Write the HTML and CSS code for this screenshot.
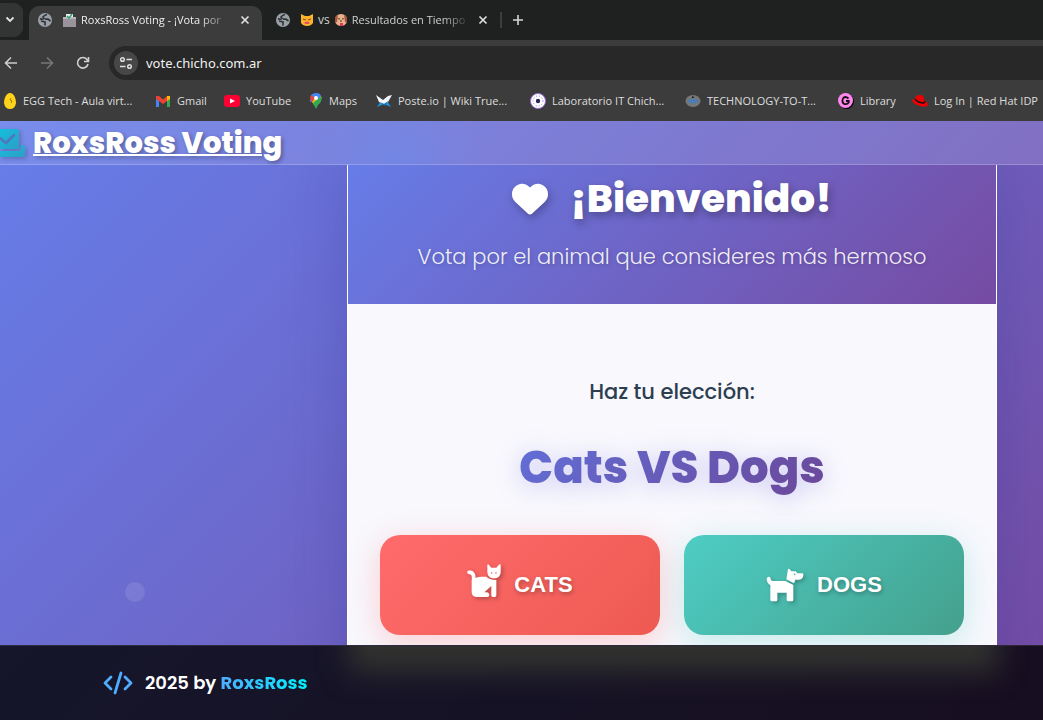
FILE: index.html
```html
<!DOCTYPE html>
<html lang="es">
<head>
<meta charset="utf-8">
<title>RoxsRoss Voting</title>
<link rel="stylesheet" href="styles.css">
</head>
<body>
<svg width="0" height="0" class="defs" aria-hidden="true">
  <defs>
    <symbol id="globe" viewBox="0 0 14 14"><circle cx="7" cy="7" r="7" fill="#9aa0a6"/><path d="M2 5.500Q4.500 7 6 5.500L5 4Q6.500 2.200 9 1.500M7 6.200H10L12.500 8M3 8L7 9V12.500" fill="none" stroke="#30363a" stroke-width="1.700"/></symbol>
    <symbol id="close" viewBox="0 0 10 10"><path d="M1.500 1.500L8.500 8.500M8.500 1.500L1.500 8.500" stroke="#e3e3e3" stroke-width="1.600"/></symbol>
    <linearGradient id="teal" x1="0" y1="0" x2="1" y2="1"><stop offset="0" stop-color="#16bddd"/><stop offset="1" stop-color="#2b9fc6"/></linearGradient>
  </defs>
</svg>
<div class="browser">
  <div class="tabs">
    <button class="tab-search" aria-label="Buscar pestañas"><svg width="10" height="10" viewBox="0 0 10 10"><path d="M1.500 3.500L5 7L8.500 3.500" fill="none" stroke="#e3e3e3" stroke-width="1.800"/></svg></button>
    <div class="tab active">
      <svg width="14" height="14"><use href="#globe"/></svg>
      <svg width="13" height="13" viewBox="0 0 13 13"><path d="M3 0H10V5H3Z" fill="#eee"/><path d="M0 3H13V13H0Z" fill="#9a929d"/><path d="M0 3H13V5H0Z" fill="#b9b4bd"/><path d="M4 2L6 4L9 0" fill="none" stroke="#2aa56b" stroke-width="1.500"/></svg>
      <span class="tab-title">RoxsRoss Voting - ¡Vota por</span>
      <button class="x" aria-label="Cerrar"><svg width="10" height="10"><use href="#close"/></svg></button>
    </div>
    <div class="tab">
      <svg width="14" height="14"><use href="#globe"/></svg>
      <svg width="12" height="12" viewBox="0 0 12 12"><path d="M0 0L4 2H8L12 0V9Q10 12 6 12Q2 12 0 9Z" fill="#fbb42c"/><path d="M2 5L5 6M10 5L7 6" stroke="#9c4a18" stroke-width="1.200"/><path d="M3 9Q6 6 9 9Q6 11 3 9Z" fill="#e8416b"/></svg>
      <span>vs</span>
      <svg width="12" height="12" viewBox="0 0 12 12"><path d="M1 2Q6-2 11 2L12 8Q10 12 6 12Q2 12 0 8Z" fill="#e9b28c"/><path d="M0 3L3 1L2 8L0 9ZM12 3L9 1L10 8L12 9Z" fill="#a4563b"/><path d="M4 4V5.500M8 4V5.500M5 7H7" stroke="#432" stroke-width="1.200"/><path d="M5 9H8V12H5Z" fill="#e9365d"/></svg>
      <span class="tab-title">Resultados en Tiempo</span>
      <button class="x" aria-label="Cerrar"><svg width="10" height="10"><use href="#close"/></svg></button>
    </div>
    <span class="sep"></span>
    <button class="x" aria-label="Nueva pestaña"><svg width="12" height="12" viewBox="0 0 12 12"><path d="M6 1V11M1 6H11" stroke="#d5d5d5" stroke-width="1.600"/></svg></button>
  </div>
  <div class="toolbar">
    <button aria-label="Atrás"><svg width="14" height="14" viewBox="0 0 14 14"><path d="M13 7H2M7 1.500L1.500 7L7 12.500" fill="none" stroke="#ccc" stroke-width="1.600"/></svg></button>
    <button aria-label="Adelante"><svg width="14" height="14" viewBox="0 0 14 14"><path d="M1 7H12M7 1.500L12.500 7L7 12.500" fill="none" stroke="#777" stroke-width="1.600"/></svg></button>
    <button aria-label="Recargar"><svg width="14" height="14" viewBox="0 0 14 14"><path d="M12 8A5.300 5.300 0 1 1 11 3.500L12 5M12.500 1V5.500H8" fill="none" stroke="#d0d0d0" stroke-width="1.600"/></svg></button>
    <div class="urlbar">
      <span class="site"><svg width="14" height="14" viewBox="0 0 14 14"><path d="M7.500 3.500H13M1 10.500H6.500" stroke="#ddd" stroke-width="1.600"/><circle cx="3.500" cy="3.500" r="1.800" fill="none" stroke="#ddd" stroke-width="1.500"/><circle cx="10.500" cy="10.500" r="1.800" fill="none" stroke="#ddd" stroke-width="1.500"/></svg></span>
      <input aria-label="Dirección" value="vote.chicho.com.ar">
    </div>
  </div>
  <nav class="bookmarks">
    <a href="#"><svg width="14" height="16" viewBox="0 0 14 16"><path d="M7 0C11 0 13 6 13 10Q12 16 7 16Q2 16 1 10C1 6 3 0 7 0Z" fill="#ffd21c"/><path d="M8 5L7 7L9 8L8 10" fill="none" stroke="#a57c00"/></svg>EGG Tech - Aula virt...</a>
    <a href="#"><svg width="16" height="12" viewBox="0 0 16 12"><path d="M1 2H4V12H1Z" fill="#4285f4"/><path d="M12 2H15V12H12Z" fill="#34a853"/><path d="M1 1L4 1L8 4.500L12 1H15V4L8 9L1 4Z" fill="#ea4335"/><path d="M12 1H15V4L12 6Z" fill="#fbbc04"/></svg>Gmail</a>
    <a href="#"><svg width="16" height="12" viewBox="0 0 16 12"><rect width="16" height="12" rx="3" fill="#ff0033"/><path d="M6 3.500L11 6L6 8.500Z" fill="#fff"/></svg>YouTube</a>
    <a href="#"><svg width="14" height="16" viewBox="0 0 14 16"><path d="M2 2Q7-2 11 2L6 8L1 9Z" fill="#4285f4"/><path d="M2 2L6 5L3 9Q0 5 2 2Z" fill="#ea4335"/><path d="M3 9L10 1L13 5L7 10L5 12Z" fill="#fbbc04"/><path d="M12 3Q14 8 9 12L7 16L4 10L12 3Z" fill="#34a853"/><path d="M7 0Q11 0 12 3L9 6L6 2Z" fill="#4285f4"/><circle cx="7" cy="5" r="2" fill="#fff"/></svg>Maps</a>
    <a href="#"><svg width="16" height="14" viewBox="0 0 16 14"><path d="M1 13L5 7L8 9L11 7L15 13L8 10Z" fill="#2196df"/><path d="M0 1L7 6L12 2L16 1L12 8L8 10L3 8Z" fill="#f4f7fa"/><path d="M4 8L8 10L12 7L9 12Z" fill="#176fa9"/></svg>Poste.io | Wiki True...</a>
    <a href="#"><svg width="16" height="16" viewBox="0 0 16 16"><circle cx="8" cy="8" r="7.500" fill="#fff" stroke="#9b72dc"/><circle cx="8" cy="8" r="5" fill="none" stroke="#8171d3" stroke-width="1" stroke-dasharray="1 2"/><circle cx="8" cy="8" r="2.200" fill="#27235d"/></svg>Laboratorio IT Chich...</a>
    <a href="#"><svg width="16" height="14" viewBox="0 0 16 14"><ellipse cx="8" cy="7" rx="7.500" ry="6" fill="#777"/><path d="M2 8Q4 4 8 5Q13 4 14 8Q8 11 2 8Z" fill="#4f7daf"/><path d="M7 2L9 3V4H7Z" fill="#222"/></svg>TECHNOLOGY-TO-T...</a>
    <a href="#"><svg width="16" height="16" viewBox="0 0 16 16"><circle cx="8.500" cy="8.500" r="7.500" fill="#080808"/><circle cx="7.500" cy="7.500" r="7.500" fill="#ff86ed"/><path d="M10.500 5.500Q7 2.500 5 5.500Q3.500 9 6 10.800Q9 12 10.700 9.500V8H8" fill="none" stroke="#111" stroke-width="1.800"/></svg>Library</a>
    <a href="#"><svg width="16" height="14" viewBox="0 0 16 14"><path d="M4 2Q8 0 11 2L13 7Q16 8 16 11Q14 14 8 12Q1 10 0 6Q1 5 3 5Z" fill="#ee0000"/><path d="M3 5Q6 9 12 9L13 7" fill="none" stroke="#111" stroke-width="1.400"/></svg>Log In | Red Hat IDP</a>
  </nav>
</div>
<div class="site-page">
  <header class="site-header">
    <svg width="25" height="30" viewBox="0 0 25 30"><path d="M0 1H17Q19 1 19 3V21H0Z" fill="url(#teal)"/><path d="M0 23H19Q21 23 21 21V17H23Q25 17 25 19V26Q25 29 22 29H0Z" fill="url(#teal)"/><path d="M0 10L6 15L14 7" fill="none" stroke="#4d78bd" stroke-width="2.500" stroke-linecap="round"/></svg>
    <a href="#">RoxsRoss Voting</a>
  </header>
  <main>
    <span class="bubble"></span>
    <section class="card">
      <div class="card-head">
        <h1><svg width="36" height="32" viewBox="0 36 512 444"><path fill="#fff" d="M47.600 300.400L228.300 469.100c7.500 7 17.400 10.900 27.700 10.900s20.200-3.900 27.700-10.900L464.400 300.400c30.400-28.300 47.600-68 47.600-109.500v-5.800c0-69.900-50.500-129.500-119.400-141C347 36.500 300.600 51.400 268 84L256 96 244 84c-32.600-32.600-79-47.500-124.600-39.900C50.500 55.600 0 115.200 0 185.100v5.800c0 41.500 17.200 81.200 47.600 109.500z"/></svg>¡Bienvenido!</h1>
        <p>Vota por el animal que consideres más hermoso</p>
      </div>
      <div class="card-body">
        <h2>Haz tu elección:</h2>
        <p class="versus"><span>Cats VS Dogs</span></p>
        <div class="choices">
          <button class="cats"><svg width="34" height="34" viewBox="0 0 102 102"><path d="M6 25H10Q20 27 20 40V52" fill="none" stroke="#fff" stroke-width="11" stroke-linecap="round"/><path d="M14 50Q24 38 44 38H58Q65 46 88 48V94Q88 99 83 99H78Q73 99 73 94V66L52 85H60Q67 87 67 93Q67 99 61 99H28Q14 98 14 84Z" fill="#fff"/><path d="M64 1L73 11H88L97 1Q101 0 101 4V25Q99 43 81 43Q63 43 61 25V4Q61 0 64 1Z" fill="#fff" stroke="#f5605d" stroke-width="3" paint-order="stroke"/><circle cx="74" cy="27" r="2.500" fill="#f5605d"/><circle cx="87" cy="27" r="2.500" fill="#f5605d"/></svg>CATS</button>
          <button class="dogs"><svg width="38" height="34" viewBox="0 0 114 102"><path d="M2 32Q3 26 9 26Q14 27 14 34Q15 39 20 39H58L82 51V95Q82 100 77 100H67Q62 100 62 95V74H34V95Q34 100 29 100H18Q13 100 13 95V51Q3 47 2 32Z" fill="#fff"/><path d="M66 4Q68 1 71 4L76 10H89L94 16H109Q113 16 112 21Q111 35 99 35H88L84 46L61 34Z" fill="#fff"/><circle cx="86" cy="19" r="2.500" fill="#49aa98"/></svg>DOGS</button>
        </div>
      </div>
    </section>
  </main>
  <footer>
    <svg width="30" height="24" viewBox="0 0 30 24"><path d="M8 6L2 12L8 18M22 6L28 12L22 18M18 2L12 22" fill="none" stroke="#4facfe" stroke-width="2.800" stroke-linecap="round" stroke-linejoin="round"/></svg>
    <p>2025 by <a href="#">RoxsRoss</a></p>
  </footer>
</div>
</body>
</html>
```
FILE: styles.css
```css
* { box-sizing: border-box; margin: 0; padding: 0; }
body {
  display: flex;
  flex-direction: column;
  height: 100vh;
  overflow: hidden;
  font-family: Poppins, Inter, sans-serif;
}
.defs { position: absolute; }
svg { flex: none; }
button { border: 0; background: none; font: inherit; color: inherit; }
a { color: inherit; text-decoration: none; }

.browser {
  flex: none;
  background: #3c3c3c;
  color: #dedede;
  font: 12px/16px "Open Sans", "Noto Sans", sans-serif;
}
.tabs {
  display: flex;
  align-items: center;
  height: 40px;
  background: #1f2120;
}
.tab-search {
  width: 23px;
  height: 34px;
  margin-right: 6px;
  padding-right: 4px;
  border-radius: 0 9px 9px 0;
  background: #333534;
}
.tab {
  display: flex;
  align-items: center;
  gap: 5px;
  width: 233px;
  height: 34px;
  padding: 0 10px 0 9px;
  color: #d0d0d0;
}
.tab:not(.active) { width: 238px; padding-left: 14px; }
.tab.active {
  align-self: flex-end;
  padding-bottom: 6px;
  border-radius: 10px 10px 0 0;
  background: #3c3c3c;
  color: #eee;
}
.tab > svg:first-child { margin-right: 6px; }
.tab-title {
  flex: 1;
  white-space: nowrap;
  font-size: 11px;
  mask-image: linear-gradient(90deg, #000 80%, rgba(0, 0, 0, .2));
}
.x { display: flex; padding: 0 2px; margin-left: 6px; }
.tabs > .x { margin-left: 8px; }
.sep { width: 2px; height: 16px; background: #3c3e3d; }

.toolbar {
  display: flex;
  align-items: center;
  gap: 22px;
  height: 40px;
  padding: 6px 0 0 4px;
}
.toolbar button { display: flex; }
.urlbar {
  display: flex;
  flex: 1;
  align-items: center;
  gap: 8px;
  height: 34px;
  margin-left: -3px;
  padding-left: 5px;
  border-radius: 17px 0 0 17px;
  background: #282828;
}
.site {
  display: flex;
  align-items: center;
  justify-content: center;
  width: 24px;
  height: 24px;
  border-radius: 50%;
  background: #474747;
}
.urlbar input {
  flex: 1;
  border: 0;
  outline: 0;
  background: none;
  color: #f0f0f0;
  font: 13px/20px "Noto Sans", sans-serif;
}
.bookmarks {
  display: grid;
  grid-template-columns: 152px 69px 85px 67px 154px 155px 153px 74px auto;
  align-items: center;
  height: 41px;
  padding-left: 3px;
  font-size: 11px;
}
.bookmarks a {
  display: flex;
  align-items: center;
  gap: 6px;
  white-space: nowrap;
}

.site-page {
  display: flex;
  flex: 1;
  flex-direction: column;
  min-height: 0;
  background: linear-gradient(135deg, #667eea, #764ba2);
}
.site-header {
  display: flex;
  flex: none;
  align-items: center;
  gap: 8px;
  height: 44px;
  border-bottom: 1px solid rgba(255, 255, 255, .2);
  background:
    radial-gradient(circle at 38% 100%, rgba(102, 140, 240, .4), transparent 90px),
    radial-gradient(ellipse at 93% 120%, rgba(118, 75, 140, .2), transparent 160px),
    rgba(255, 255, 255, .12);
}
.site-header svg { filter: drop-shadow(2px 2px 2px rgba(0, 0, 0, .2)); }
.site-header a {
  color: #fff;
  font-size: 29px;
  font-weight: 800;
  line-height: 40px;
  text-decoration: underline;
  text-decoration-thickness: 2px;
  text-shadow: 2px 2px 4px rgba(0, 0, 0, .3);
}
main {
  position: relative;
  display: flex;
  flex: 1;
  justify-content: center;
  align-items: flex-start;
  min-height: 0;
  overflow: hidden;
  padding-left: 301px;
}
.bubble {
  position: absolute;
  bottom: 43px;
  left: 12%;
  width: 20px;
  height: 20px;
  border-radius: 50%;
  background: rgba(255, 255, 255, .1);
}
.card {
  flex: 0 1 650px;
  margin-top: -24px;
  border: 1px solid #fff;
  background: #f8f8fd;
  box-shadow: 0 20px 60px rgba(31, 38, 135, .25);
  text-align: center;
}
.card-head {
  padding: 24px 32px 32px;
  background: linear-gradient(135deg, #667eea, #764ba2);
  color: #fff;
}
.card-head h1 {
  display: flex;
  justify-content: center;
  align-items: center;
  gap: 22px;
  font-size: 39px;
  font-weight: 800;
  line-height: 66px;
  text-shadow: 2px 4px 8px rgba(0, 0, 0, .3);
}
.card-head svg { filter: drop-shadow(2px 4px 4px rgba(0, 0, 0, .25)); }
.card-head p {
  color: rgba(255, 255, 255, .9);
  font-size: 21px;
  font-weight: 300;
  line-height: 30px;
  margin-top: 10px;
  text-shadow: 1px 1px 4px rgba(0, 0, 0, .2);
}
.card-body { padding: 72px 32px 32px; }
.card-body h2 {
  color: #2c3e50;
  font-size: 21px;
  font-weight: 500;
  line-height: 32px;
}
.versus {
  margin: 26px 0 33px;
  font-size: 45px;
  font-weight: 800;
  line-height: 68px;
  filter: drop-shadow(0 4px 12px rgba(102, 90, 220, .3));
}
.versus span {
  background: linear-gradient(135deg, #626fd8, #6b4798);
  background-clip: text;
  color: transparent;
}
.choices { display: grid; grid-template-columns: 1fr 1fr; gap: 24px; }
.choices button {
  display: flex;
  align-items: center;
  justify-content: center;
  gap: 13px;
  height: 100px;
  border-radius: 20px;
  color: #fff;
  font: bold 22px/28px "Liberation Sans", Arial, sans-serif;
  text-shadow: 1px 2px 4px rgba(0, 0, 0, .3);
}
.choices svg { margin-bottom: 8px; filter: drop-shadow(2px 2px 2px rgba(0, 0, 0, .25)); }
.choices .dogs svg { margin-bottom: 0; }
.choices .cats {
  background: linear-gradient(135deg, #ff6b6b, #ee5a52);
  box-shadow: 0 8px 32px rgba(255, 107, 107, .3);
}
.choices .dogs {
  background: linear-gradient(135deg, #4ecdc4, #44a08d);
  box-shadow: 0 8px 32px rgba(78, 205, 196, .3);
}
footer {
  position: relative;
  display: flex;
  flex: none;
  align-items: center;
  gap: 12px;
  height: 75px;
  overflow: hidden;
  padding-left: 103px;
  border-top: 1px solid rgba(255, 255, 255, .1);
  background: rgba(0, 0, 0, .8);
  color: #fff;
  font-size: 18px;
  font-weight: 600;
  line-height: 28px;
}
/* Soft glow of the card that continues behind the footer. */
footer::before {
  content: "";
  position: absolute;
  top: -40px;
  left: calc(50% - 174px);
  width: 650px;
  height: 66px;
  background: #31322f;
  filter: blur(14px);
}
footer a {
  background: linear-gradient(90deg, #4facfe, #00f2fe);
  background-clip: text;
  color: transparent;
  font-weight: 700;
}
```
